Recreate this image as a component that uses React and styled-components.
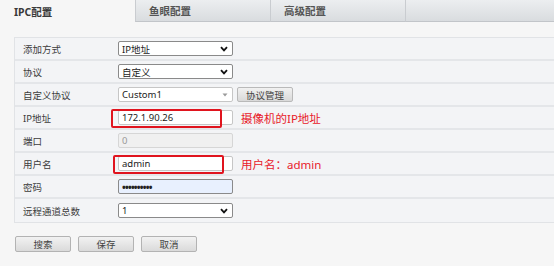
import styled, { createGlobalStyle } from 'styled-components';

const Global = createGlobalStyle`
  html, body { margin: 0; padding: 0; background: #f6f6f6; }
  * { box-sizing: border-box; }
`;

const Page = styled.div`
  width: 554px;
  height: 266px;
  background: #f6f6f6;
  font-family: "Noto Sans", "Noto Sans CJK SC", sans-serif;
  color: #333;
  overflow: hidden;
`;

const TabBar = styled.div`
  display: flex;
  height: 22px;
`;

const Tab = styled.div`
  width: ${p => (p.$fill ? 'auto' : '135px')};
  flex: ${p => (p.$fill ? '1' : 'none')};
  display: flex;
  align-items: center;
  padding-left: ${p => (p.$active ? '14px' : '13px')};
  font-size: 10.5px;
  font-weight: 700;
  color: ${p => (p.$active ? '#3a3a3a' : '#555')};
  background: ${p => (p.$active ? '#f6f6f6' : 'linear-gradient(#eceef0, #d9dcdf)')};
  border-left: ${p => (p.$active ? 'none' : '1px solid #c9ccd0')};
  border-bottom: ${p => (p.$active ? 'none' : '1px solid #c2c5c9')};
`;

const Content = styled.div`
  padding: 15px 0 0 14px;
`;

const Panel = styled.div`
  background: #f3f4f6;
  border: 1px solid #e1e3e6;
  border-right: none;
`;

const Row = styled.div`
  display: grid;
  grid-template-columns: 103px 1fr;
  align-items: center;
  height: 23px;
  border-bottom: ${p => (p.$last ? 'none' : '2px solid #e4e6e9')};
`;

const Label = styled.div`
  padding-left: 8px;
  font-size: 9.5px;
  color: #3c3c3c;
`;

const Field = styled.div`
  display: flex;
  align-items: center;
  gap: 4px;
  position: relative;
`;

const Box = styled.div`
  width: 115px;
  height: 15px;
  display: flex;
  align-items: center;
  justify-content: space-between;
  padding: 0 4px 0 3px;
  font-size: 9.5px;
  color: ${p => (p.$disabled ? '#999' : '#222')};
  background: ${p => (p.$disabled ? '#f0f0f0' : p.$filled ? '#e8f0fe' : '#fff')};
  border: 1px solid ${p => (p.$disabled ? '#d6d6d6' : p.$soft ? '#c6c6c6' : '#8a8a8a')};
  border-radius: 2px;
`;

const Dots = styled.span`
  letter-spacing: -0.8px;
  font-size: 10px;
  font-weight: 700;
  line-height: 1;
`;

const Highlight = styled.div`
  position: absolute;
  left: ${p => p.$left}px;
  top: -1px;
  width: 111px;
  height: 19px;
  border: 2px solid #e0141e;
  border-radius: 2px;
`;

const Note = styled.span`
  margin-left: 4px;
  font-size: 11.5px;
  color: #e8202a;
`;

const SmallButton = styled.div`
  height: 15px;
  padding: 0 8px;
  display: flex;
  align-items: center;
  font-size: 9.5px;
  color: #444;
  background: linear-gradient(#f1f1f1, #d9d9d9);
  border: 1px solid #b9b9b9;
  border-radius: 2px;
`;

const Actions = styled.div`
  display: flex;
  gap: 7px;
  margin-top: 13px;
  padding-left: 1px;
`;

const ActionButton = styled.div`
  width: 56px;
  height: 16px;
  display: flex;
  align-items: center;
  justify-content: center;
  font-size: 9.5px;
  color: #444;
  background: linear-gradient(#f2f2f2, #dadada);
  border: 1px solid #b3b3b3;
  border-radius: 2px;
`;

const Chevron = () => (
  <svg width="8" height="6" viewBox="0 0 8 6">
    <path d="M1 1.2 L4 4.4 L7 1.2" fill="none" stroke="#111" strokeWidth="1.8" />
  </svg>
);

const Caret = () => (
  <svg width="6" height="4" viewBox="0 0 6 4">
    <path d="M0.5 0.5 L5.5 0.5 L3 3.5 Z" fill="#9a9a9a" />
  </svg>
);

export default function App() {
  return (
    <Page>
      <Global />
      <TabBar>
        <Tab $active>IPC配置</Tab>
        <Tab>鱼眼配置</Tab>
        <Tab>高级配置</Tab>
        <Tab $fill />
      </TabBar>
      <Content>
        <Panel>
          <Row>
            <Label>添加方式</Label>
            <Field><Box>IP地址<Chevron /></Box></Field>
          </Row>
          <Row>
            <Label>协议</Label>
            <Field><Box>自定义<Chevron /></Box></Field>
          </Row>
          <Row>
            <Label>自定义协议</Label>
            <Field>
              <Box $soft>Custom1<Caret /></Box>
              <SmallButton>协议管理</SmallButton>
            </Field>
          </Row>
          <Row>
            <Label>IP地址</Label>
            <Field>
              <Box $soft>172.1.90.26</Box>
              <Highlight $left={-7} />
              <Note>摄像机的IP地址</Note>
            </Field>
          </Row>
          <Row>
            <Label>端口</Label>
            <Field><Box $disabled>0</Box></Field>
          </Row>
          <Row>
            <Label>用户名</Label>
            <Field>
              <Box $soft>admin</Box>
              <Highlight $left={-5} />
              <Note>用户名：admin</Note>
            </Field>
          </Row>
          <Row>
            <Label>密码</Label>
            <Field><Box $filled><Dots>••••••••••</Dots></Box></Field>
          </Row>
          <Row $last>
            <Label>远程通道总数</Label>
            <Field><Box>1<Chevron /></Box></Field>
          </Row>
        </Panel>
        <Actions>
          <ActionButton>搜索</ActionButton>
          <ActionButton>保存</ActionButton>
          <ActionButton>取消</ActionButton>
        </Actions>
      </Content>
    </Page>
  );
}
